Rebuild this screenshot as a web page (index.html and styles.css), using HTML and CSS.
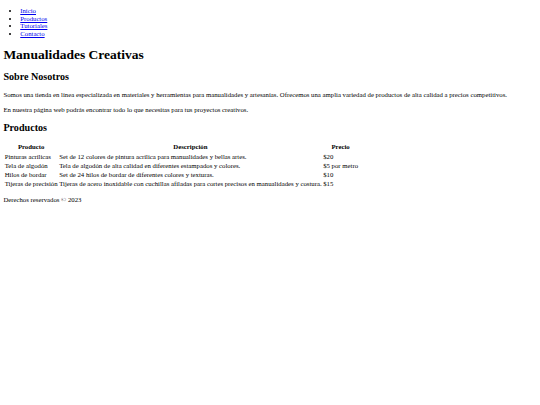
FILE: index.html
```html
<!DOCTYPE html>
<html lang="es">
<head>
<meta charset="utf-8">
<title>Manualidades Creativas</title>
<link rel="stylesheet" href="styles.css">
</head>
<body class="body">
  <nav>
    <ul class="nav-list">
      <li><a href="#">Inicio</a></li>
      <li><a href="#">Productos</a></li>
      <li><a href="#">Tutoriales</a></li>
      <li><a href="#">Contacto</a></li>
    </ul>
  </nav>
  <h1 class="title">Manualidades Creativas</h1>
  <section>
    <h2 class="section-title">Sobre Nosotros</h2>
    <p class="text">Somos una tienda en línea especializada en materiales y herramientas para manualidades y artesanías. Ofrecemos una amplia variedad de productos de alta calidad a precios competitivos.</p>
    <p class="text">En nuestra página web podrás encontrar todo lo que necesitas para tus proyectos creativos.</p>
  </section>
  <section>
    <h2 class="section-title">Productos</h2>
    <table class="products">
      <thead>
        <tr><th>Producto</th><th>Descripción</th><th>Precio</th></tr>
      </thead>
      <tbody>
        <tr><td>Pinturas acrílicas</td><td>Set de 12 colores de pintura acrílica para manualidades y bellas artes.</td><td>$20</td></tr>
        <tr><td>Tela de algodón</td><td>Tela de algodón de alta calidad en diferentes estampados y colores.</td><td>$5 por metro</td></tr>
        <tr><td>Hilos de bordar</td><td>Set de 24 hilos de bordar de diferentes colores y texturas.</td><td>$10</td></tr>
        <tr><td>Tijeras de precisión</td><td>Tijeras de acero inoxidable con cuchillas afiladas para cortes precisos en manualidades y costura.</td><td>$15</td></tr>
      </tbody>
    </table>
  </section>
  <footer>
    <p class="text">Derechos reservados © 2023</p>
  </footer>
</body>
</html>
```

FILE: styles.css
```css
.body {
  margin: 0 3.375px 3.375px;
  background: #ffffff;
  font-family: "Liberation Serif", "Times New Roman", serif;
  font-size: 6.75px;
  line-height: 7.76px;
  color: #000000;
}

.nav-list {
  margin: 6.75px 0;
  padding-left: 16.875px;
}

.nav-list a {
  color: #0000ee;
}

.title {
  font-size: 13.5px;
  line-height: 15.53px;
  margin: 9.045px 0;
}

.section-title {
  font-size: 10.125px;
  line-height: 11.64px;
  margin: 8.404px 0;
}

.text {
  margin: 6.75px 0;
}

.products {
  border-spacing: 1px;
  font-size: 6.75px;
  line-height: 7.76px;
}

.products th,
.products td {
  padding: 0.25px;
}
```
